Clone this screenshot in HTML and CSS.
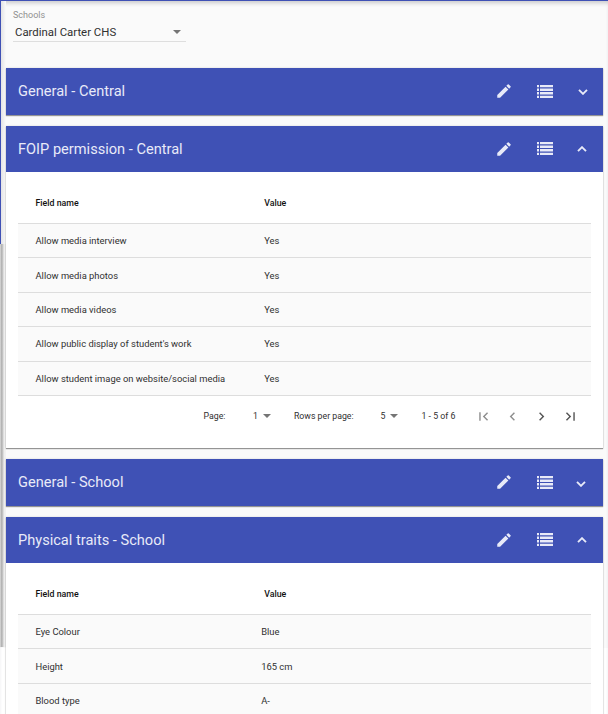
FILE: index.html
```html
<!DOCTYPE html>
<html lang="en">
<head>
<meta charset="utf-8">
<title>Student details</title>
<link rel="stylesheet" href="styles.css">
</head>
<body>
<svg class="defs" aria-hidden="true">
  <symbol id="edit" viewBox="0 0 24 24"><path d="M3 17.25V21h3.75L17.81 9.94l-3.75-3.75L3 17.25zM20.71 7.04a1 1 0 0 0 0-1.41l-2.34-2.34a1 1 0 0 0-1.41 0l-1.83 1.83 3.75 3.75 1.83-1.83z"/></symbol>
  <symbol id="list" viewBox="0 0 16 13"><path d="M0 0h2v2.3H0zM3 0h13v2.3H3zM0 3.6h2v2.3H0zM3 3.6h13v2.3H3zM0 7.1h2v2.3H0zM3 7.1h13v2.3H3zM0 10.7h2V13H0zM3 10.7h13V13H3z"/></symbol>
  <symbol id="down" viewBox="0 0 10 6"><path d="M1 .8l4 4 4-4" fill="none" stroke="currentColor" stroke-width="1.9"/></symbol>
  <symbol id="up" viewBox="0 0 10 6"><path d="M1 5.2l4-4 4 4" fill="none" stroke="currentColor" stroke-width="1.9"/></symbol>
  <symbol id="first" viewBox="0 0 24 24"><path d="M18.41 16.59L13.82 12l4.59-4.59L17 6l-6 6 6 6zM6 6h2v12H6z"/></symbol>
  <symbol id="prev" viewBox="0 0 24 24"><path d="M15.41 7.41L14 6l-6 6 6 6 1.41-1.41L10.83 12z"/></symbol>
  <symbol id="next" viewBox="0 0 24 24"><path d="M10 6L8.59 7.41 13.17 12l-4.58 4.59L10 18l6-6z"/></symbol>
  <symbol id="last" viewBox="0 0 24 24"><path d="M5.59 7.41L10.18 12l-4.59 4.59L7 18l6-6-6-6zM16 6h2v12h-2z"/></symbol>
</svg>
<div class="page">
  <div class="rail"></div>
  <main>
    <div class="select">
      <label>Schools</label>
      <div class="select-value"><span>Cardinal Carter CHS</span><i class="caret"></i></div>
    </div>

    <section class="card">
      <header><h2>General - Central</h2><svg class="edit"><use href="#edit"/></svg><svg class="list"><use href="#list"/></svg><svg class="chevron shifted"><use href="#down"/></svg></header>
    </section>

    <section class="card">
      <header><h2>FOIP permission - Central</h2><svg class="edit"><use href="#edit"/></svg><svg class="list"><use href="#list"/></svg><svg class="chevron"><use href="#up"/></svg></header>
      <div class="body">
        <div class="row head"><span>Field name</span><span>Value</span></div>
        <div class="row"><span>Allow media interview</span><span>Yes</span></div>
        <div class="row"><span>Allow media photos</span><span>Yes</span></div>
        <div class="row"><span>Allow media videos</span><span>Yes</span></div>
        <div class="row"><span>Allow public display of student's work</span><span>Yes</span></div>
        <div class="row"><span>Allow student image on website/social media</span><span>Yes</span></div>
        <div class="pager">
          <span class="page-label">Page:</span><span class="page-num">1</span><i class="caret"></i>
          <span class="rows-label">Rows per page:</span><span class="rows-num">5</span><i class="caret"></i>
          <span class="range">1 - 5 of 6</span>
          <svg class="off"><use href="#first"/></svg><svg class="off"><use href="#prev"/></svg><svg><use href="#next"/></svg><svg><use href="#last"/></svg>
        </div>
      </div>
    </section>

    <section class="card">
      <header><h2>General - School</h2><svg class="edit"><use href="#edit"/></svg><svg class="list"><use href="#list"/></svg><svg class="chevron low"><use href="#down"/></svg></header>
    </section>

    <section class="card">
      <header><h2>Physical traits - School</h2><svg class="edit"><use href="#edit"/></svg><svg class="list"><use href="#list"/></svg><svg class="chevron"><use href="#up"/></svg></header>
      <div class="body traits">
        <div class="row head"><span>Field name</span><span>Value</span></div>
        <div class="row"><span>Eye Colour</span><span>Blue</span></div>
        <div class="row"><span>Height</span><span>165 cm</span></div>
        <div class="row"><span>Blood type</span><span>A-</span></div>
      </div>
    </section>
  </main>
</div>
</body>
</html>
```
FILE: styles.css
```css
* { box-sizing: border-box; }
body {
  margin: 0;
  font-family: Roboto, "Liberation Sans", sans-serif;
  color: #303030;
  background: #fff;
}
.defs { position: absolute; width: 0; height: 0; }
svg { display: block; fill: currentColor; flex: none; }
.page {
  display: flex;
  height: 714px;
  overflow: hidden;
  background: linear-gradient(#fafafa, #fafafa) 0 0 / 100% 647px no-repeat;
  border-top: 1px solid #3f51b5;
  box-shadow: inset 0 4px 4px -2px #c8c8ca;
}
.rail {
  flex: none;
  width: 6px;
  height: 646px;
  background:
    linear-gradient(#3f51b5, #3f51b5) 0 0 / 1px 243px no-repeat,
    linear-gradient(90deg, #e3e3e5, #fafafa) 1px 0 / 5px 243px no-repeat,
    linear-gradient(90deg, #dcdcdc, #b4b4b4 25%, #c8c8c8 50%, #eee 65%, #f2f2f2) 0 243px / 6px 403px no-repeat;
}
main { width: 597px; flex: none; }
.select { height: 67px; padding: 9px 0 0 7px; }
.select label {
  display: block;
  font-size: 9px;
  line-height: 11px;
  color: #909090;
}
.select-value {
  display: flex;
  align-items: center;
  justify-content: space-between;
  width: 173px;
  height: 21px;
  padding: 1px 5px 0 2px;
  border-bottom: 1px solid #dedede;
  font-size: 11.4px;
}
.caret {
  flex: none;
  width: 0;
  border: 4px solid transparent;
  border-top-color: #757575;
  border-bottom: 0;
}
.card {
  margin-bottom: 11px;
  background: #fff;
  box-shadow: 0 1px 1px rgba(0,0,0,.38), 0 0 2px rgba(0,0,0,.14);
}
.card header {
  display: flex;
  align-items: center;
  height: 46.5px;
  padding: 0 16.5px 0 12px;
  background: #3f51b5;
  color: #e8eaf8;
}
h2 {
  flex: 1;
  margin: 0;
  font-size: 14.6px;
  font-weight: 400;
  line-height: 20px;
}
.edit { width: 18px; height: 18px; margin-right: 24px; }
.list { width: 16px; height: 13px; margin-right: 24px; }
.chevron { width: 10px; height: 6px; }
.shifted { position: relative; left: 1.5px; top: 1px; }
.low { position: relative; left: -.5px; top: 2px; }
.body { height: 276px; padding: 10px 12px 0; }
.row {
  display: grid;
  grid-template-columns: 228.7px 1fr;
  align-items: center;
  height: 34.4px;
  padding-left: 17.5px;
  border-bottom: 1px solid #ddd;
  background: #fafafa;
  font-size: 9.38px;
}
.row.head { height: 42px; background: #fff; font-weight: 500; font-size: 8.8px; color: #111; }
.traits .row:not(.head) span:last-child { margin-left: -3px; }
.pager {
  display: flex;
  align-items: center;
  height: 41px;
  padding-left: 185.5px;
  font-size: 8.75px;
  white-space: nowrap;
}
.page-label { width: 50px; }
.page-num { width: 10.5px; }
.rows-label { width: 87.5px; margin-left: 22.5px; }
.rows-num { width: 9.5px; }
.range { width: 54px; margin-left: 23.5px; }
.pager svg { width: 17px; height: 17px; margin-right: 12px; color: #555; }
.pager .off { color: #8e8e8e; }
```
